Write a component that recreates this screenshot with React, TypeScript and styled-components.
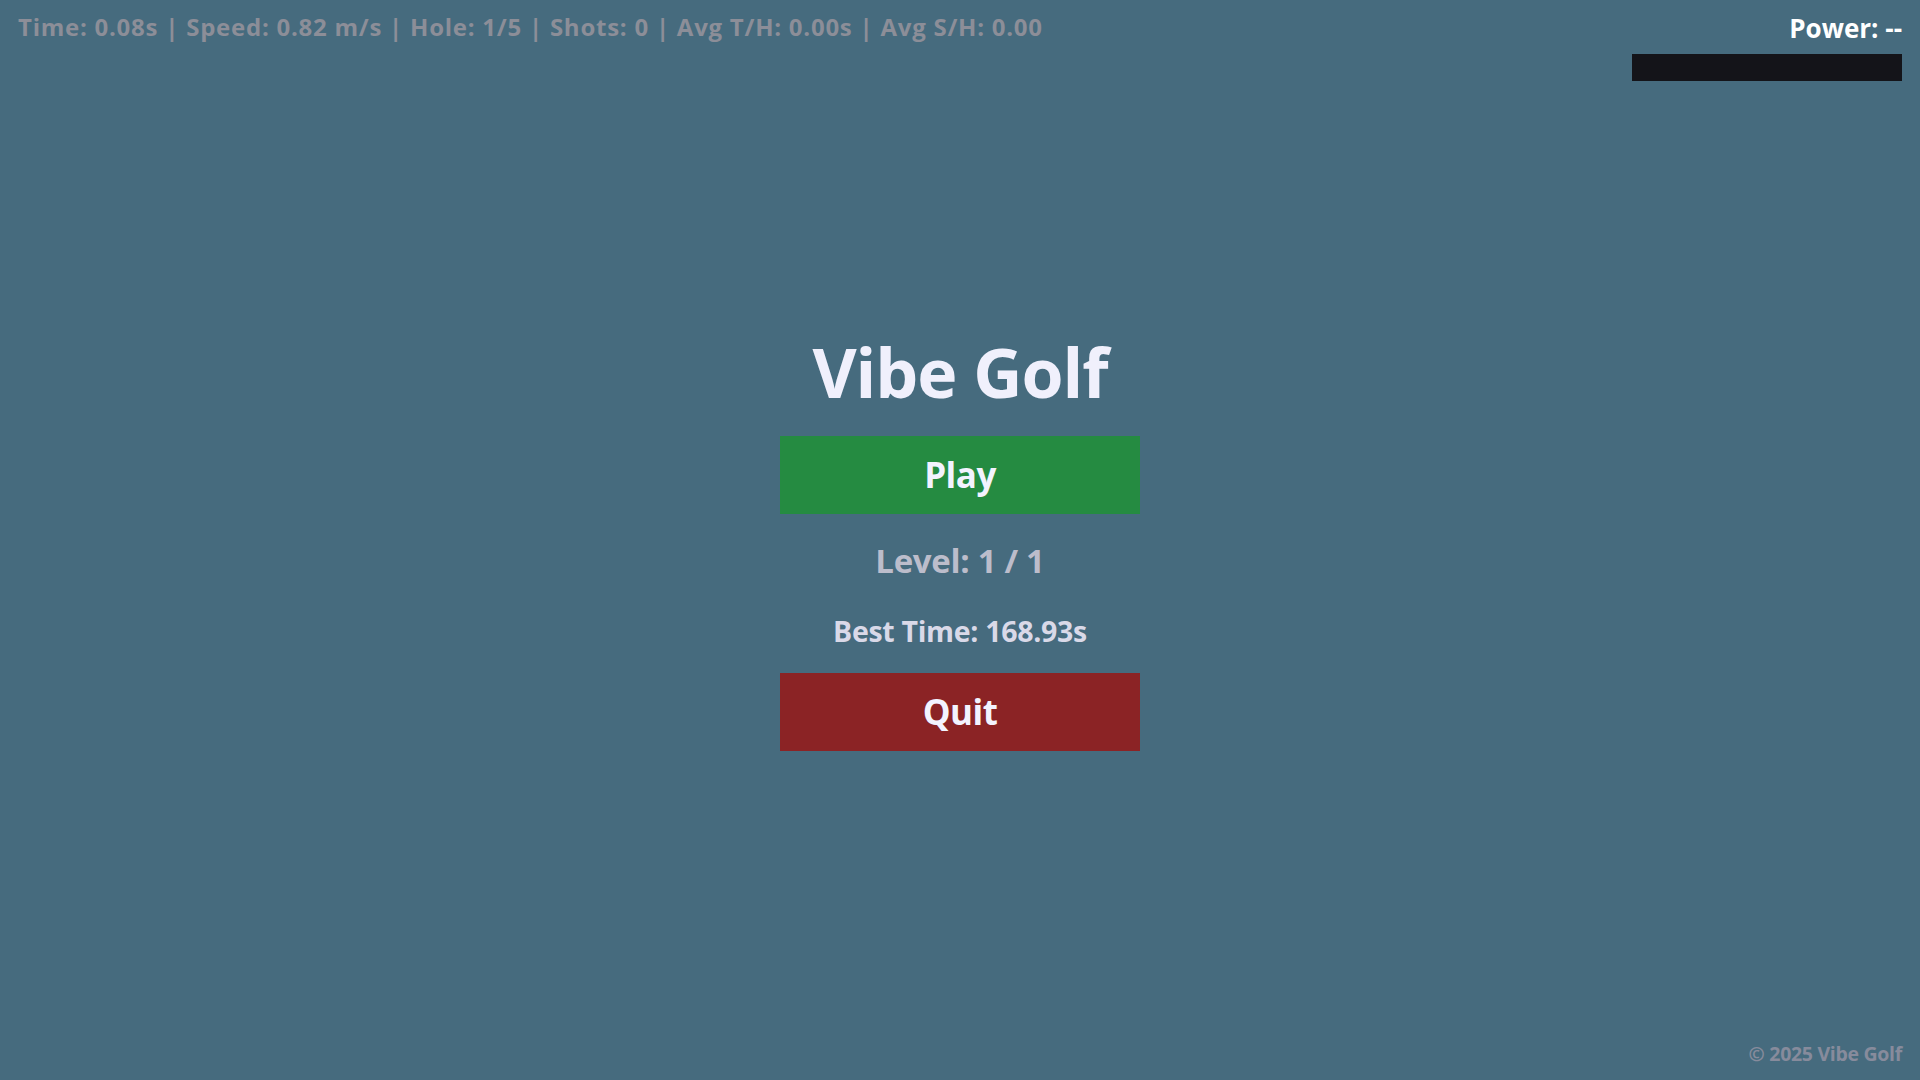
import React from "react";
import styled, { createGlobalStyle } from "styled-components";

const GlobalStyle = createGlobalStyle`
  html, body {
    margin: 0;
    padding: 0;
    background: #466b7e;
    overflow: hidden;
  }
  * { box-sizing: border-box; }
`;

const Screen = styled.div`
  width: 100vw;
  height: 100vh;
  display: grid;
  grid-template-rows: 1fr auto 1fr;
  background: #466b7e;
  font-family: "Open Sans", "Noto Sans", sans-serif;
  font-weight: 700;
`;

const TopBar = styled.div`
  display: flex;
  justify-content: space-between;
  align-items: flex-start;
  padding: 12px 18px 0 18px;
`;

const Hud = styled.div`
  color: #8c8e98;
  font-size: 24px;
  letter-spacing: 0.75px;
  line-height: 30px;
`;

const PowerBox = styled.div`
  display: flex;
  flex-direction: column;
  align-items: flex-end;
  gap: 10px;
`;

const PowerLabel = styled.div`
  color: #ffffff;
  font-size: 26px;
  line-height: 32px;
`;

const PowerBar = styled.div`
  width: 270px;
  height: 27px;
  background: #141419;
`;

const Menu = styled.div`
  display: flex;
  flex-direction: column;
  align-items: center;
`;

const Title = styled.h1`
  margin: 0 0 22px;
  font-size: 68px;
  line-height: 84px;
  color: #f0f0fc;
  font-weight: 700;
  letter-spacing: -1px;
`;

const Button = styled.button<{ $tone: "play" | "quit" }>`
  width: 360px;
  height: 78px;
  border: none;
  border-radius: 0;
  background: ${(p) => (p.$tone === "play" ? "#258b41" : "#8b2325")};
  color: #f3f3ff;
  font-family: inherit;
  font-weight: 700;
  font-size: 35px;
  letter-spacing: -0.5px;
  cursor: pointer;
  padding: 0;
`;

const Level = styled.div`
  margin-top: 27px;
  font-size: 33px;
  line-height: 40px;
  color: #bcbdcb;
  letter-spacing: -0.3px;
`;

const Best = styled.div`
  margin: 33px 0 25px;
  font-size: 28.5px;
  line-height: 34px;
  color: #d9d9e8;
  letter-spacing: -0.3px;
`;

const Bottom = styled.div`
  display: flex;
  justify-content: flex-end;
  align-items: flex-end;
  padding: 0 18px 14px;
`;

const Footer = styled.div`
  color: #878b9c;
  font-size: 19.5px;
  line-height: 24px;
  letter-spacing: -0.3px;
`;

export default function App() {
  return (
    <>
      <GlobalStyle />
      <Screen>
        <TopBar>
          <Hud>
            Time: 0.08s | Speed: 0.82 m/s | Hole: 1/5 | Shots: 0 | Avg T/H: 0.00s | Avg S/H: 0.00
          </Hud>
          <PowerBox>
            <PowerLabel>Power: --</PowerLabel>
            <PowerBar />
          </PowerBox>
        </TopBar>
        <Menu>
          <Title>Vibe Golf</Title>
          <Button $tone="play">Play</Button>
          <Level>Level: 1 / 1</Level>
          <Best>Best Time: 168.93s</Best>
          <Button $tone="quit">Quit</Button>
        </Menu>
        <Bottom>
          <Footer>© 2025 Vibe Golf</Footer>
        </Bottom>
      </Screen>
    </>
  );
}
